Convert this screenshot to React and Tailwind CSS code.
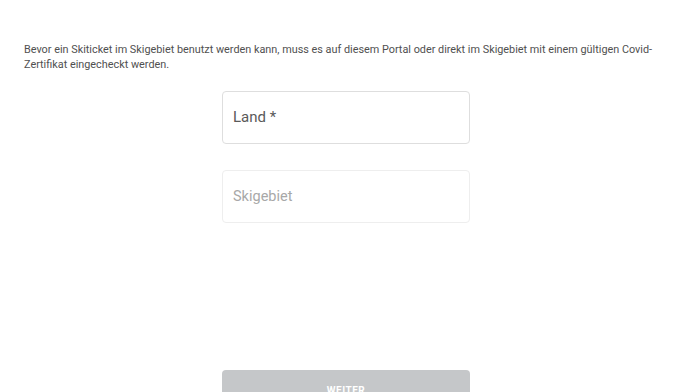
import React from "react";

export default function App() {
  return (
    <div className="w-[700px] h-[392px] overflow-hidden bg-white font-['Roboto',sans-serif]">
      <div className="pt-[42px] px-6">
        <p className="text-[10.85px] leading-[15px] text-[#505050]">
          Bevor ein Skiticket im Skigebiet benutzt werden kann, muss es auf diesem Portal oder direkt im Skigebiet mit einem gültigen Covid-Zertifikat eingecheckt werden.
        </p>
      </div>
      <div className="flex justify-center pr-2 mt-[19px]">
        <div className="w-[248px] flex flex-col">
          {/* Land */}
          <div className="h-[53px] rounded border border-[#dedede] bg-white flex items-center px-[10px]">
            <span className="text-[15px] text-[#5a5a5a]">Land *</span>
          </div>
          {/* Skigebiet (disabled) */}
          <div className="mt-[26px] h-[53px] rounded border border-[#eeeeee] bg-white flex items-center px-[10px]">
            <span className="text-[14.5px] text-[#a8a8a8]">Skigebiet</span>
          </div>
          {/* Weiter */}
          <button className="mt-[147px] h-10 rounded bg-[#c5c7c9] text-white text-[10px] font-bold tracking-wider">
            WEITER
          </button>
        </div>
      </div>
    </div>
  );
}
